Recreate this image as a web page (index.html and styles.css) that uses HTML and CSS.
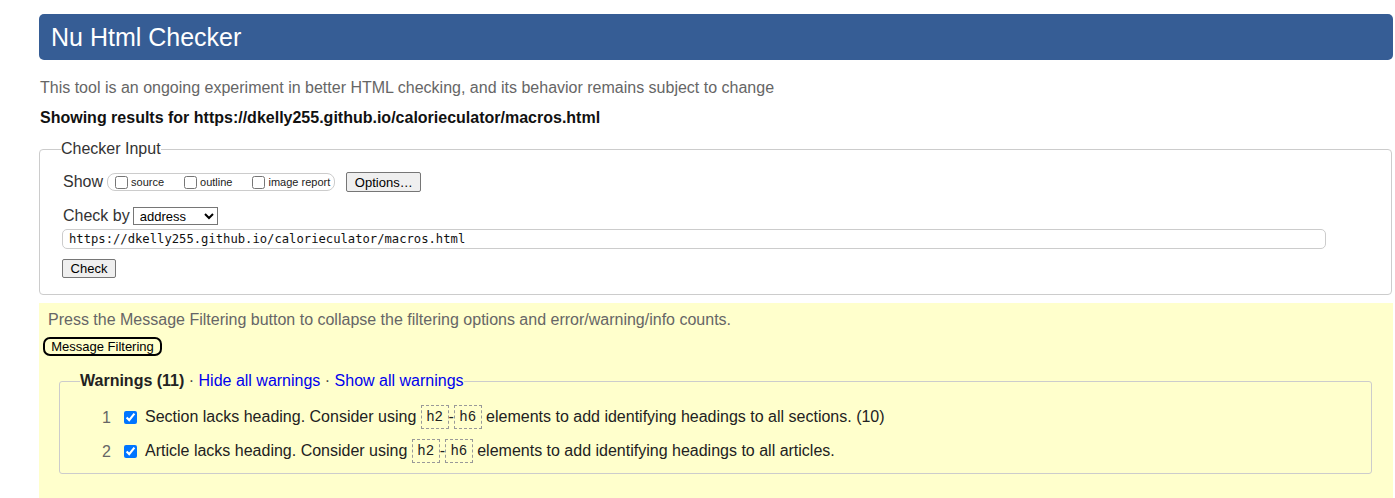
FILE: index.html
```html
<!DOCTYPE html>
<html lang="en">
<head>
<meta charset="utf-8">
<title>Showing results for https://dkelly255.github.io/calorieculator/macros.html - Nu Html Checker</title>
<link rel="stylesheet" href="styles.css">
</head>
<body>
<div class="page">
  <h1 class="masthead">Nu Html Checker</h1>
  <p class="tagline">This tool is an ongoing experiment in better HTML checking, and its behavior remains subject to change</p>
  <p class="results-for">Showing results for https://dkelly255.github.io/calorieculator/macros.html</p>

  <fieldset class="checker">
    <legend class="checker-legend">Checker Input</legend>
    <div class="row show-row">
      <span class="label">Show</span>
      <span class="show-group">
        <label class="opt"><input type="checkbox" class="cb">source</label>
        <label class="opt"><input type="checkbox" class="cb">outline</label>
        <label class="opt last"><input type="checkbox" class="cb">image report</label>
      </span>
      <button class="btn options-btn" type="button">Options…</button>
    </div>
    <div class="row checkby-row">
      <span class="label">Check by</span>
      <select class="select"><option>address</option></select>
    </div>
    <div class="url">https://dkelly255.github.io/calorieculator/macros.html</div>
    <button class="btn check-btn" type="button">Check</button>
  </fieldset>

  <div class="filter-area">
    <p class="filter-note">Press the Message Filtering button to collapse the filtering options and error/warning/info counts.</p>
    <button class="filter-btn" type="button">Message Filtering</button>
    <fieldset class="warnings">
      <legend class="warnings-legend"><strong>Warnings (11)</strong> · <a class="lnk" href="#">Hide all warnings</a> · <a class="lnk" href="#">Show all warnings</a></legend>
      <div class="item">
        <span class="num">1</span>
        <input type="checkbox" class="cb item-cb" checked>
        <span class="msg">Section lacks heading. Consider using <code class="code">h2</code>-<code class="code">h6</code> elements to add identifying headings to all sections. (10)</span>
      </div>
      <div class="item">
        <span class="num">2</span>
        <input type="checkbox" class="cb item-cb" checked>
        <span class="msg">Article lacks heading. Consider using <code class="code">h2</code>-<code class="code">h6</code> elements to add identifying headings to all articles.</span>
      </div>
    </fieldset>
  </div>
</div>
</body>
</html>
```

FILE: styles.css
```css
html, body {
  margin: 0;
  padding: 0;
  background: #fff;
}
body {
  font-family: "Liberation Sans", Arial, sans-serif;
  font-size: 16px;
  color: #222;
}
.page {
  padding: 14px 2px 0 39px;
}
.masthead {
  margin: 0;
  height: 46px;
  line-height: 46px;
  padding-left: 12px;
  background: #365d95;
  color: #fff;
  font-size: 25px;
  font-weight: normal;
  border-radius: 5px;
}
.tagline {
  margin: 18px 0 0 1px;
  line-height: 20px;
  color: #666;
}
.results-for {
  margin: 10px 0 0 1px;
  line-height: 20px;
  font-weight: bold;
  color: #111;
}
.checker {
  margin: 12px 1px 0 0;
  padding: 13px 21px 16px 21px;
  border: 1px solid #ccc;
  border-radius: 4px;
}
.checker-legend {
  padding: 0;
  line-height: 18px;
  color: #333;
}
.row {
  display: flex;
  align-items: center;
  height: 22px;
  padding-left: 2px;
}
.label {
  color: #333;
}
.show-group {
  display: inline-flex;
  align-items: center;
  margin-left: 4px;
  height: 16px;
  padding: 0 4px 0 3px;
  border: 1px solid #ccc;
  border-radius: 8px;
  font-size: 11px;
  color: #222;
}
.opt {
  display: inline-flex;
  align-items: center;
  margin-right: 16px;
}
.opt.last {
  margin-right: 0;
}
.cb {
  width: 13px;
  height: 13px;
  margin: 0 3px 0 4px;
}
.btn {
  font-family: "Liberation Sans", Arial, sans-serif;
  font-size: 13px;
  color: #000;
  background: #efefef;
  border: 1px solid #767676;
  border-radius: 2px;
  padding: 0 6px;
}
.options-btn {
  margin-left: 11px;
  height: 20px;
  width: 75px;
}
.checkby-row {
  margin-top: 12px;
}
.select {
  margin-left: 3px;
  height: 18px;
  width: 85px;
  font-family: "Liberation Sans", Arial, sans-serif;
  font-size: 13px;
  color: #000;
  background: #fff;
  border: 1px solid #767676;
  border-radius: 0;
  padding: 0 0 0 2px;
}
.url {
  margin: 2px 44px 0 1px;
  height: 18px;
  line-height: 18px;
  border: 1px solid #ccc;
  border-radius: 5px;
  padding-left: 6px;
  font-family: "DejaVu Sans Mono", "Liberation Mono", monospace;
  font-size: 12.2px;
  color: #111;
}
.check-btn {
  display: block;
  margin: 10px 0 0 1px;
  height: 19px;
  width: 54px;
}
.filter-area {
  margin-top: 8px;
  background: #ffffcc;
  padding: 7px 0 40px 0;
}
.filter-note {
  margin: 0 0 0 9px;
  line-height: 20px;
  color: #666;
}
.filter-btn {
  display: block;
  margin: 7px 0 0 4px;
  height: 19px;
  width: 119px;
  padding: 0;
  font-family: "Liberation Sans", Arial, sans-serif;
  font-size: 13px;
  color: #000;
  background: transparent;
  border: 2px solid #000;
  border-radius: 7px;
}
.warnings {
  margin: 16px 21px 0 20px;
  padding: 11px 20px 4px 20px;
  border: 1px solid #ccc;
  border-radius: 3px;
}
.warnings-legend {
  padding: 0;
  line-height: 18px;
  color: #444;
}
.warnings-legend strong {
  color: #222;
}
.lnk {
  color: #0000ee;
  text-decoration: none;
}
.item {
  display: flex;
  align-items: center;
  height: 34px;
}
.num {
  width: 22px;
  margin-left: 22px;
  color: #666;
}
.item-cb {
  margin: 0 8px 2px 0;
}
.msg {
  color: #222;
}
.code {
  display: inline-block;
  font-family: "Liberation Mono", "DejaVu Sans Mono", monospace;
  font-size: 14px;
  line-height: 22px;
  padding: 0 4.5px;
  border: 1px dashed #999;
  color: #222;
  vertical-align: middle;
  position: relative;
  top: -1px;
}
```
